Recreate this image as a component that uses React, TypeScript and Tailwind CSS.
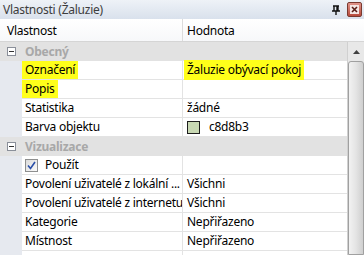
import React from "react";

type Row =
  | { kind: "group"; label: string }
  | { kind: "prop"; name: React.ReactNode; value?: React.ReactNode };

const Hl = ({ children }: { children: React.ReactNode }) => (
  <span className="bg-[#ffff1a] -ml-[3px] px-[3px] pb-[2px] pt-[1px]">{children}</span>
);

const rows: Row[] = [
  { kind: "group", label: "Obecný" },
  { kind: "prop", name: <Hl>Označení</Hl>, value: <Hl>Žaluzie obývací pokoj</Hl> },
  { kind: "prop", name: <Hl>Popis</Hl> },
  { kind: "prop", name: "Statistika", value: "žádné" },
  {
    kind: "prop",
    name: "Barva objektu",
    value: (
      <span className="flex items-center gap-[9px]">
        <span className="w-[13px] h-[13px] bg-[#c8d8b3] border border-[#1e1e1e]" />
        <span>c8d8b3</span>
      </span>
    ),
  },
  { kind: "group", label: "Vizualizace" },
  {
    kind: "prop",
    name: (
      <span className="flex items-center gap-[7px]">
        <span className="w-[13px] h-[13px] border border-[#8e8f8f] bg-gradient-to-br from-[#dcdcdc] to-[#fafafa] flex items-center justify-center">
          <svg width="9" height="9" viewBox="0 0 9 9">
            <path d="M1 4.5 L3.5 7.5 L8 1" stroke="#2a4fa8" strokeWidth="1.6" fill="none" />
          </svg>
        </span>
        <span>Použít</span>
      </span>
    ),
  },
  { kind: "prop", name: "Povolení uživatelé z lokální ...", value: "Všichni" },
  { kind: "prop", name: "Povolení uživatelé z internetu", value: "Všichni" },
  { kind: "prop", name: "Kategorie", value: "Nepřiřazeno" },
  { kind: "prop", name: "Místnost", value: "Nepřiřazeno" },
  { kind: "prop", name: "" },
];

const Minus = () => (
  <span className="w-[9px] h-[9px] border border-[#8a8f99] bg-white flex items-center justify-center">
    <span className="w-[5px] h-[1px] bg-[#333]" />
  </span>
);

export default function App() {
  return (
    <div
      className="w-[364px] h-[255px] overflow-hidden bg-white text-[12px] tracking-[-0.25px] text-black flex flex-col"
      style={{ fontFamily: '"Noto Sans", "DejaVu Sans", sans-serif' }}
    >
      {/* title bar */}
      <div className="h-[19px] shrink-0 flex items-center pl-[3px] pr-[2px] bg-gradient-to-b from-[#eef2f7] to-[#d9e1ec] text-[#3d3d3d]">
        <span className="flex-1 leading-none">Vlastnosti (Žaluzie)</span>
        <svg width="10" height="11" viewBox="0 0 10 11" className="mr-[6px] mt-[2px]">
          <path d="M2 1h6M3 1v5M6 1v5M7 1v5M1 6h8M5 6v4" stroke="#111" strokeWidth="1.4" fill="none" />
        </svg>
        <span className="w-[15px] h-[15px] rounded-[2px] border border-[#7a3a30] bg-gradient-to-b from-[#e0948a] to-[#b84a3c] flex items-center justify-center">
          <span className="w-[9px] h-[9px] bg-[#f4e6e4] flex items-center justify-center">
            <svg width="7" height="7" viewBox="0 0 7 7">
              <path d="M1 1L6 6M6 1L1 6" stroke="#5a1d16" strokeWidth="1.6" />
            </svg>
          </span>
        </span>
      </div>

      {/* header */}
      <div className="h-[23px] shrink-0 flex border-b border-[#d5d5d5] bg-gradient-to-b from-white to-[#f7f8fa]">
        <div className="w-[183px] flex items-center pl-[7px] pt-[2px] border-r border-[#dcdcdc]">Vlastnost</div>
        <div className="flex-1 flex items-center pl-[4px] pt-[2px]">Hodnota</div>
      </div>

      {/* body */}
      <div className="flex-1 flex min-h-0">
        <div className="flex-1 flex flex-col bg-[#e6e9ef]">
          {rows.map((r, i) =>
            r.kind === "group" ? (
              <div key={i} className="h-[19px] shrink-0 flex items-center bg-[#e2e2e2]">
                <div className="w-[22px] flex justify-center">
                  <Minus />
                </div>
                <span className="pl-[3px] font-bold text-[#a8a8a8]">{r.label}</span>
              </div>
            ) : (
              <div key={i} className="h-[19px] shrink-0 flex">
                <div className="w-[22px] shrink-0" />
                <div className="flex-1 flex bg-white border-b border-[#e3e3e3]">
                  <div className="w-[161px] shrink-0 flex items-center pl-[3px] border-r border-[#e3e3e3] whitespace-nowrap overflow-hidden">
                    {r.name}
                  </div>
                  <div className="flex-1 flex items-center pl-[4px] whitespace-nowrap">{r.value}</div>
                </div>
              </div>
            )
          )}
        </div>

        {/* scrollbar */}
        <div className="w-[17px] shrink-0 flex flex-col bg-[#e8e8e8] border-l border-[#d0d0d0]">
          <div className="h-[19px] shrink-0 flex items-center justify-center">
            <svg width="7" height="4" viewBox="0 0 7 4">
              <path d="M0 4L3.5 0L7 4Z" fill="#404040" />
            </svg>
          </div>
          <div className="flex-1 rounded-t-[3px] border border-[#a0a0a0] bg-gradient-to-r from-[#f2f2f2] via-[#e4e4e4] to-[#cfcfcf]" />
        </div>
      </div>
    </div>
  );
}
